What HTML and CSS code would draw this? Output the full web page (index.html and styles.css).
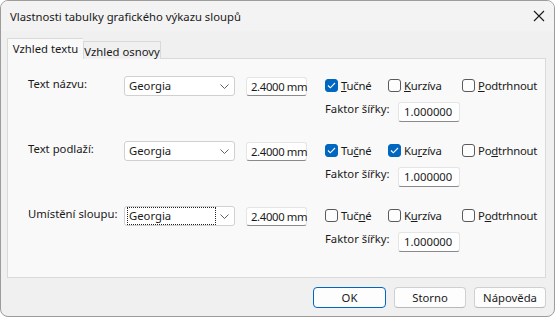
FILE: index.html
```html
<!DOCTYPE html>
<html lang="cs">
<head>
<meta charset="utf-8">
<title>Vlastnosti tabulky grafického výkazu sloupů</title>
<link rel="stylesheet" href="styles.css">
</head>
<body>
<div class="window">
  <div class="titlebar">
    <span class="title">Vlastnosti tabulky grafického výkazu sloupů</span>
    <svg class="close" width="12" height="12" viewBox="0 0 12 12"><path d="M1 1L11 11M11 1L1 11" stroke="#1a1a1a" stroke-width="1.1" fill="none"/></svg>
  </div>
  <div class="content">
    <div class="tabs">
      <div class="tab active">Vzhled textu</div>
      <div class="tab">Vzhled osnovy</div>
    </div>
    <div class="panel">
      <div class="group">
        <div class="label">Text názvu:</div>
        <div class="combo"><span class="combo-text">Georgia</span><svg class="chev" width="9" height="5" viewBox="0 0 9 5"><path d="M0.5 0.5L4.5 4.5L8.5 0.5" stroke="#606060" fill="none"/></svg></div>
        <div class="input size">2.4000 mm</div>
        <div class="right">
          <div class="checks">
            <label class="chk w1"><span class="box on"><svg width="9" height="7" viewBox="0 0 9 7"><path d="M1 3.5L3.3 5.8L8 1" stroke="#fff" stroke-width="1.1" fill="none"/></svg></span><span><u>T</u>učné</span></label>
            <label class="chk w2"><span class="box"></span><span><u>K</u>urzíva</span></label>
            <label class="chk"><span class="box"></span><span><u>P</u>odtrhnout</span></label>
          </div>
          <div class="factor">
            <span class="flabel">Faktor šířky:</span>
            <div class="input fin">1.000000</div>
          </div>
        </div>
      </div>
      <div class="group">
        <div class="label">Text podlaží:</div>
        <div class="combo"><span class="combo-text">Georgia</span><svg class="chev" width="9" height="5" viewBox="0 0 9 5"><path d="M0.5 0.5L4.5 4.5L8.5 0.5" stroke="#606060" fill="none"/></svg></div>
        <div class="input size">2.4000 mm</div>
        <div class="right">
          <div class="checks">
            <label class="chk w1"><span class="box on"><svg width="9" height="7" viewBox="0 0 9 7"><path d="M1 3.5L3.3 5.8L8 1" stroke="#fff" stroke-width="1.1" fill="none"/></svg></span><span>Tu<u>č</u>né</span></label>
            <label class="chk w2"><span class="box on"><svg width="9" height="7" viewBox="0 0 9 7"><path d="M1 3.5L3.3 5.8L8 1" stroke="#fff" stroke-width="1.1" fill="none"/></svg></span><span>Ku<u>r</u>zíva</span></label>
            <label class="chk"><span class="box"></span><span>Po<u>d</u>trhnout</span></label>
          </div>
          <div class="factor">
            <span class="flabel">Faktor šířky:</span>
            <div class="input fin">1.000000</div>
          </div>
        </div>
      </div>
      <div class="group">
        <div class="label">Umístění sloupu:</div>
        <div class="combo"><span class="combo-text focus">Georgia</span><svg class="chev" width="9" height="5" viewBox="0 0 9 5"><path d="M0.5 0.5L4.5 4.5L8.5 0.5" stroke="#606060" fill="none"/></svg></div>
        <div class="input size">2.4000 mm</div>
        <div class="right">
          <div class="checks">
            <label class="chk w1"><span class="box"></span><span>Tuč<u>n</u>é</span></label>
            <label class="chk w2"><span class="box"></span><span>K<u>u</u>rzíva</span></label>
            <label class="chk"><span class="box"></span><span>P<u>o</u>dtrhnout</span></label>
          </div>
          <div class="factor">
            <span class="flabel">Faktor šířky:</span>
            <div class="input fin">1.000000</div>
          </div>
        </div>
      </div>
    </div>
    <div class="buttons">
      <button class="btn default">OK</button>
      <button class="btn">Storno</button>
      <button class="btn">Nápověda</button>
    </div>
  </div>
</div>
</body>
</html>
```
FILE: styles.css
```css
* { box-sizing: border-box; }
html, body { margin: 0; padding: 0; background: #ffffff; }
body {
  font-family: "Noto Sans", "Open Sans", sans-serif;
  font-size: 11.3px;
  color: #1a1a1a;
  white-space: nowrap;
}
.window {
  width: 555px;
  height: 317px;
  border: 1px solid #9c9c9c;
  border-radius: 8px;
  background: #f0f0f0;
  overflow: hidden;
  display: flex;
  flex-direction: column;
}
.titlebar {
  height: 30px;
  flex: none;
  background: #f3f3f3;
  display: flex;
  align-items: center;
  justify-content: space-between;
  padding: 0 9px 0 9px;
}
.title { font-size: 11.3px; color: #1a1a1a; }
.content {
  flex: 1;
  padding: 7px 8px 0 6px;
  display: flex;
  flex-direction: column;
}
.tabs {
  display: flex;
  align-items: flex-end;
  height: 21px;
  margin-bottom: -1px;
  position: relative;
  z-index: 1;
}
.tab {
  height: 18px;
  width: 78px;
  border: 1px solid #d9d9d9;
  border-bottom: none;
  background: #f0f0f0;
  display: flex;
  align-items: center;
  justify-content: center;
  padding-top: 1px;
}
.tab.active {
  height: 21px;
  width: 76px;
  background: #f9f9f9;
  border-right: none;
  padding-bottom: 3px;
}
.panel {
  height: 220px;
  width: 539px;
  background: #f9f9f9;
  border: 1px solid #d9d9d9;
  padding: 17px 0 0 20px;
  display: flex;
  flex-direction: column;
  gap: 18px;
}
.group {
  display: flex;
  align-items: flex-start;
  height: 47px;
}
.label {
  width: 96px;
  padding-top: 0;
  line-height: 16px;
}
.combo {
  width: 111px;
  height: 20px;
  background: #ffffff;
  border: 1px solid #d0d0d0;
  border-radius: 3px;
  display: flex;
  align-items: center;
  justify-content: space-between;
  padding: 0 5px 0 2px;
}
.combo-text {
  line-height: 16px;
  padding: 0 2px 0 1px;
  width: 89px;
  border: 1px dotted transparent;
}
.combo-text.focus { border-color: #222; }
.input {
  height: 19px;
  background: #ffffff;
  border: 1px solid #e5e5e5;
  border-bottom-color: #8a8a8a;
  border-radius: 3px;
  line-height: 17px;
  padding: 0 0 0 4px;
}
.size {
  width: 61px;
  margin-left: 11px;
  margin-top: 1px;
  letter-spacing: -0.35px;
}
.right {
  margin-left: 18px;
  display: flex;
  flex-direction: column;
}
.checks {
  display: flex;
  height: 17px;
  align-items: center;
  margin-top: 1px;
}
.chk {
  display: flex;
  align-items: center;
  gap: 3px;
  letter-spacing: -0.2px;
}
.chk.w1 { width: 63px; }
.chk.w2 { width: 74px; }
.box {
  width: 13px;
  height: 13px;
  border: 1px solid #5a5a5a;
  border-radius: 3px;
  background: #fdfdfd;
  display: flex;
  align-items: center;
  justify-content: center;
}
.box.on {
  background: #0067c0;
  border-color: #0067c0;
}
.factor {
  display: flex;
  align-items: flex-start;
  margin-top: 8px;
}
.flabel {
  width: 73px;
  line-height: 14px;
}
.fin {
  width: 62px;
  height: 20px;
  line-height: 18px;
  padding-left: 5px;
}
.buttons {
  display: flex;
  justify-content: flex-end;
  gap: 8px;
  margin-top: 9px;
}
.btn {
  font-family: inherit;
  font-size: 11.3px;
  color: #1a1a1a;
  width: 72px;
  height: 21px;
  background: #fdfdfd;
  border: 1px solid #d0d0d0;
  border-bottom-color: #b8b8b8;
  border-radius: 4px;
  padding: 0;
}
.btn.default {
  width: 73px;
  border: 1px solid #0067c0;
}
```
